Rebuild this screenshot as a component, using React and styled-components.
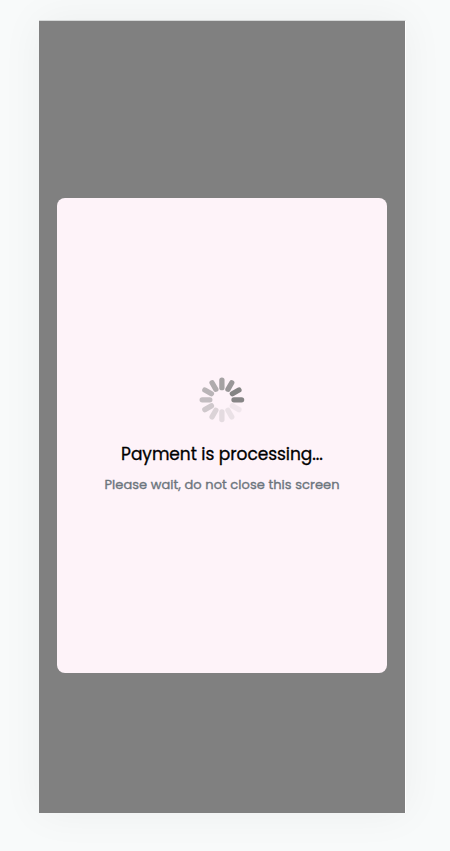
import React from 'react';
import styled, { createGlobalStyle } from 'styled-components';

const GlobalStyle = createGlobalStyle`
  * { box-sizing: border-box; }
  body {
    margin: 0;
    background: #f8fafa;
    font-family: Poppins, Inter, 'Liberation Sans', sans-serif;
  }
`;

const Page = styled.main`
  height: 851px;
  padding: 20px 44px 38px 39px;
  overflow: hidden;
`;

const Screen = styled.section`
  width: 367px;
  height: 793px;
  display: flex;
  padding: 177px 17px 0 18px;
  background: #808080;
  border-top: 1px solid #d5d7d7;
  border-right: 1px solid #ffffff;
  box-shadow: 0 0 40px rgba(0, 0, 0, 0.05);
`;

const Dialog = styled.div`
  width: 330px;
  height: 475px;
  display: flex;
  flex-direction: column;
  align-items: center;
  padding-top: 178px;
  border-radius: 8px;
  background: #fef3f9;
`;

const Spinner = styled.svg`
  display: block;
  width: 48px;
  height: 48px;
  flex: none;
`;

const Title = styled.h1`
  margin: 17px 0 0;
  font-size: 17px;
  font-weight: 400;
  line-height: 26px;
  letter-spacing: -0.04px;
  white-space: nowrap;
  color: #000;
  -webkit-text-stroke: 0.3px currentColor;
`;

const Note = styled.p`
  margin: 8px 0 0;
  font-size: 13px;
  font-weight: 400;
  line-height: 20px;
  letter-spacing: 0.06px;
  white-space: nowrap;
  color: #6c757d;
  -webkit-text-stroke: 0.35px currentColor;
`;

const SPOKES = [0.95, 0.1, 0.15, 0.2, 0.27, 0.37, 0.46, 0.54, 0.62, 0.7, 0.8, 0.96];

export default function App() {
  return (
    <>
      <GlobalStyle />
      <Page>
        <Screen>
          <Dialog role="dialog">
            <Spinner viewBox="-24 -24 48 48" aria-hidden="true">
              {SPOKES.map((opacity, i) => (
                <line
                  key={i}
                  x1="12.1"
                  x2="19.7"
                  y1="0"
                  y2="0"
                  stroke="#808080"
                  strokeWidth="5.3"
                  strokeLinecap="round"
                  opacity={opacity}
                  transform={`translate(-0.1 -0.2) rotate(${i * 30})`}
                />
              ))}
            </Spinner>
            <Title>Payment is processing...</Title>
            <Note>Please wait, do not close this screen</Note>
          </Dialog>
        </Screen>
      </Page>
    </>
  );
}
